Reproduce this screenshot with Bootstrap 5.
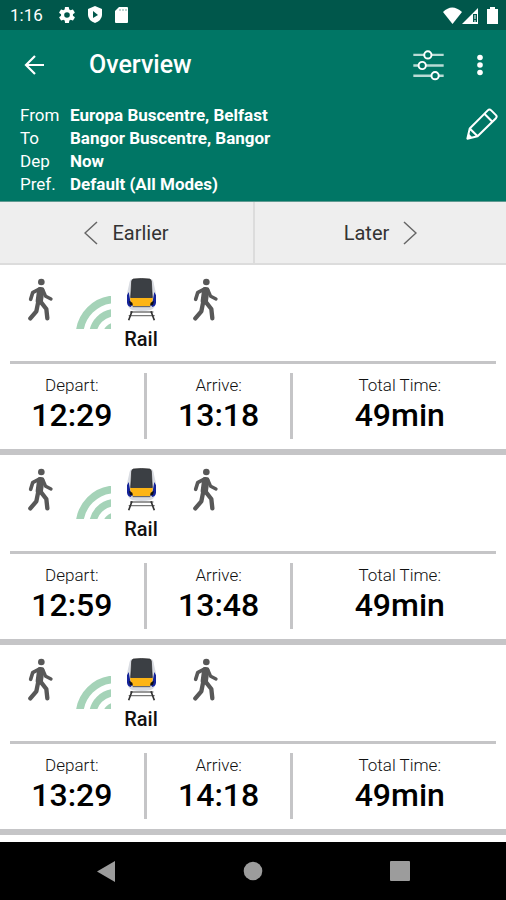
<!DOCTYPE html>
<html lang="en">
<head>
<meta charset="utf-8">
<meta name="viewport" content="width=device-width, initial-scale=1">
<title>Overview</title>
<link href="https://cdn.jsdelivr.net/npm/bootstrap@5.3.0/dist/css/bootstrap.min.css" rel="stylesheet">
<style>
  body { font-family: Roboto, "Liberation Sans", sans-serif; color: #111; background: #fff; }
  svg { display: block; flex: none; }
  .btn-plain { border: 0; padding: 0; background: none; color: inherit; }
  .status-bar { background: #00574b; height: 30px; padding: 0 8px 0 10px; font-size: 17px; line-height: 32px; }
  .app-header { background: #007665; }
  .app-bar { height: 70px; padding: 0 23px 0 24px; }
  .app-title { font-size: 25px; line-height: 32px; font-weight: 500; margin: 0 0 0 45px; }
  .menu-gap { gap: 33px; }
  .query { padding: 4px 8px 5px 20px; border-bottom: 1px solid #5f9a91; }
  .query-list { display: grid; grid-template-columns: 50px 1fr; font-size: 17px; line-height: 23px; }
  .query-list dt { font-weight: 400; }
  .query-list dd { font-weight: 700; }
  .pager { background: #eee; border-bottom: 2px solid #dcdcdc; }
  .pager-btn { height: 61px; gap: 14px; font-size: 20px; color: #333; }
  .pager-btn + .pager-btn { border-left: 2px solid #dcdcdc; }
  .trip { border-bottom: 6px solid #c5c5c7; }
  .modes { height: 96px; padding: 13px 27px 0; }
  .feed { margin: 18px 0 0 22px; }
  .rail { width: 36px; margin-left: 12px; font-size: 20px; line-height: 24px; font-weight: 500; }
  .rail svg { margin: 0 auto 6px; }
  .walk-on { margin-left: 33px; }
  .times { display: grid; grid-template-columns: 29fr 29fr 42fr; padding: 9px 0 10px; }
  .rule { height: 3px; margin: 0 10px; background: #c5c5c7; }
  .time-cell { height: 66px; }
  .time-cell:not(:last-child) { border-right: 3px solid #c5c5c7; }
  .time-cell dt { font-size: 17px; line-height: 24px; font-weight: 300; }
  .time-cell dd { font-size: 32px; line-height: 36px; font-weight: 500; color: #000; }
  .sys-nav { background: #000; height: 58px; padding: 0 33px; }
</style>
<script src="https://cdn.jsdelivr.net/npm/bootstrap@5.3.0/dist/js/bootstrap.bundle.min.js"></script>
</head>
<body>
<svg width="0" height="0" class="position-absolute" aria-hidden="true">
  <symbol id="walk" viewBox="50 38 81 129">
    <g fill="none" stroke="#585858" stroke-linecap="round" stroke-linejoin="round">
      <circle cx="93" cy="50" r="10" fill="#585858" stroke="none"/>
      <path d="M91 76L87 106" stroke-width="22"/>
      <path d="M87 71L67 82L61 102" stroke-width="11"/>
      <path d="M97 72L106 93L122 101" stroke-width="10"/>
      <path d="M84 108L78 138L60 159" stroke-width="13"/>
      <path d="M90 108L108 131L111 159" stroke-width="13"/>
    </g>
  </symbol>
  <symbol id="feed" viewBox="198 95 105 100">
    <g fill="none" stroke="#a5d3b8">
      <circle cx="318" cy="215" r="110" stroke-width="23"/>
      <circle cx="318" cy="215" r="70" stroke-width="22"/>
      <circle cx="318" cy="215" r="32" stroke-width="16"/>
    </g>
  </symbol>
  <symbol id="train" viewBox="48 38 93 129">
    <path d="M60 140H130M56 151H134" stroke="#777" stroke-width="4"/>
    <path d="M66 138L56 165M123 138L133 165" stroke="#333" stroke-width="5"/>
    <path d="M64 42Q94 37 125 42Q130 44 132 58L138 84V110Q136 130 122 134Q94 140 67 134Q53 130 51 110V84L57 58Q59 44 64 42Z" fill="#d9dce2"/>
    <path d="M56 80L51 90V112Q53 123 62 125L66 120L60 102ZM133 80L138 90V112Q136 123 127 125L123 120L129 102Z" fill="#14239a"/>
    <path d="M70 41Q94 38 119 41Q123 42 124 48L127 97H62L65 48Q66 42 70 41Z" fill="#3b3f44" stroke="#222" stroke-width="2"/>
    <path d="M60 98H129L126 113L119 122H70L63 113Z" fill="#fdb515"/>
    <path d="M57 106L67 112L69 121L60 118ZM132 106L122 112L120 121L129 118Z" fill="#111"/>
    <path d="M68 124H121" stroke="#555" stroke-width="3"/>
  </symbol>
</svg>

<div class="status-bar d-flex align-items-center text-white">
  <span>1:16</span>
  <div class="d-flex align-items-center ms-3 gap-2">
    <svg width="16" height="18" viewBox="2 1 20 22" fill="#fff" role="img" aria-label="Settings"><path d="M19.4 13a7.500 7.500 0 0 0 0-2l2.100-1.600a.5.5 0 0 0 .1-.7l-2-3.400a.5.5 0 0 0-.6-.2l-2.500 1a7.300 7.300 0 0 0-1.700-1l-.4-2.600a.5.5 0 0 0-.5-.5h-4a.5.5 0 0 0-.5.4l-.3 2.700a7.600 7.600 0 0 0-1.700 1l-2.500-1a.5.5 0 0 0-.6.200l-2 3.400c-.1.200 0 .5.100.7L4.600 11a8 8 0 0 0 0 2l-2.100 1.600a.5.5 0 0 0-.1.7l2 3.400c.1.200.4.300.6.200l2.500-1a7.300 7.300 0 0 0 1.700 1l.3 2.700c0 .2.300.4.500.4h4c.3 0 .5-.2.500-.4l.4-2.700a7.600 7.600 0 0 0 1.700-1l2.500 1c.2.100.5 0 .6-.2l2-3.400c.1-.2 0-.5-.1-.7zM12 15.500a3.500 3.500 0 1 1 0-7 3.500 3.500 0 0 1 0 7z"/></svg>
    <svg class="ms-1" width="16" height="18" viewBox="0 0 16 18" role="img" aria-label="Protected"><path d="M8 0L15 3V9Q15 14 8 17Q1 14 1 9V3Z" fill="#fff"/><path d="M6 5L11 9L6 12Z" fill="#00574b"/></svg>
    <svg class="ms-1" width="14" height="16" viewBox="0 0 14 16" role="img" aria-label="SD card"><path d="M4 0H12Q13 0 13 1V15Q13 16 12 16H1Q0 16 0 15V4Z" fill="#fff"/><path d="M5 2V4M8 2V4M11 2V4" stroke="#7fa9a3"/></svg>
  </div>
  <div class="d-flex align-items-center ms-auto">
    <svg width="19" height="17" viewBox="0 0 19 17" role="img" aria-label="Wi-Fi"><path d="M0 5Q9 -4 19 5L9.500 17Z" fill="#fff"/></svg>
    <svg width="17" height="17" viewBox="0 0 17 17" role="img" aria-label="Mobile signal"><path d="M0 17L16 1V17Z" fill="#fff"/><path d="M11 7H15V15H11Z" fill="#00574b"/><path d="M13 8V12M13 13V15" stroke="#fff"/></svg>
    <svg class="ms-2" width="11" height="17" viewBox="0 0 11 17" role="img" aria-label="Battery"><path d="M3 0H8V2H11V17H0V2H3Z" fill="#fff"/></svg>
  </div>
</div>

<header class="app-header text-white">
  <div class="app-bar d-flex align-items-center">
    <button type="button" class="btn-plain" aria-label="Back"><svg width="20" height="20" viewBox="0 0 20 20" fill="none" stroke="#fff" stroke-width="2.200"><path d="M20 10H2M11 1L2 10L11 19"/></svg></button>
    <h1 class="app-title">Overview</h1>
    <div class="menu-gap d-flex align-items-center ms-auto">
      <button type="button" class="btn-plain" aria-label="Filters"><svg width="31" height="31" viewBox="478 145 94 94" fill="none"><path d="M479 160H571M479 192H571M479 223H571" stroke="#b9dbd5" stroke-width="7"/><g fill="#007665" stroke="#fff" stroke-width="6"><circle cx="523" cy="160" r="11"/><circle cx="506" cy="192" r="11"/><circle cx="545" cy="223" r="11"/></g></svg></button>
      <button type="button" class="btn-plain" aria-label="More options"><svg width="6" height="22" viewBox="0 0 6 22" fill="#fff"><circle cx="3" cy="3.500" r="2.800"/><circle cx="3" cy="11" r="2.800"/><circle cx="3" cy="18.500" r="2.800"/></svg></button>
    </div>
  </div>
  <div class="query d-flex align-items-start">
    <dl class="query-list flex-grow-1 mb-0">
      <dt>From</dt><dd class="mb-0">Europa Buscentre, Belfast</dd>
      <dt>To</dt><dd class="mb-0">Bangor Buscentre, Bangor</dd>
      <dt>Dep</dt><dd class="mb-0">Now</dd>
      <dt>Pref.</dt><dd class="mb-0">Default (All Modes)</dd>
    </dl>
    <button type="button" class="btn-plain pt-1" aria-label="Edit journey"><svg width="32" height="32" viewBox="200 42 94 94" fill="none" stroke="#fff" stroke-width="6" stroke-linejoin="round"><path d="M204 132L211 102L264 49Q269 44 274 49L288 63Q292 67 288 72L234 125ZM254 59L278 83M211 102L234 125"/><path d="M204 132L208 117L218 128Z" fill="#fff" stroke="none"/></svg></button>
  </div>
</header>

<main>
  <nav class="pager d-flex" aria-label="Journey times">
    <button type="button" class="btn-plain pager-btn d-flex flex-fill w-50 align-items-center justify-content-center"><svg width="14" height="24" viewBox="0 0 14 24" fill="none" stroke="#666" stroke-width="1.500"><path d="M13 1L1 12L13 23"/></svg><span>Earlier</span></button>
    <button type="button" class="btn-plain pager-btn d-flex flex-fill w-50 align-items-center justify-content-center"><span>Later</span><svg width="14" height="24" viewBox="0 0 14 24" fill="none" stroke="#666" stroke-width="1.500"><path d="M1 1L13 12L1 23"/></svg></button>
  </nav>

  <ul class="list-unstyled mb-0 pb-2">
    <li class="trip">
      <div class="modes d-flex align-items-start">
        <svg width="27" height="43" role="img" aria-label="Walk"><use href="#walk"/></svg>
        <svg class="feed" width="35" height="33" role="img" aria-label="Live"><use href="#feed"/></svg>
        <div class="rail text-center"><svg width="31" height="43" aria-hidden="true"><use href="#train"/></svg>Rail</div>
        <svg class="walk-on" width="27" height="43" role="img" aria-label="Walk"><use href="#walk"/></svg>
      </div>
      <div class="rule"></div>
      <div class="times text-center">
        <dl class="time-cell mb-0"><dt>Depart:</dt><dd class="mb-0">12:29</dd></dl>
        <dl class="time-cell mb-0"><dt>Arrive:</dt><dd class="mb-0">13:18</dd></dl>
        <dl class="time-cell mb-0"><dt>Total Time:</dt><dd class="mb-0">49min</dd></dl>
      </div>
    </li>
    <li class="trip">
      <div class="modes d-flex align-items-start">
        <svg width="27" height="43" role="img" aria-label="Walk"><use href="#walk"/></svg>
        <svg class="feed" width="35" height="33" role="img" aria-label="Live"><use href="#feed"/></svg>
        <div class="rail text-center"><svg width="31" height="43" aria-hidden="true"><use href="#train"/></svg>Rail</div>
        <svg class="walk-on" width="27" height="43" role="img" aria-label="Walk"><use href="#walk"/></svg>
      </div>
      <div class="rule"></div>
      <div class="times text-center">
        <dl class="time-cell mb-0"><dt>Depart:</dt><dd class="mb-0">12:59</dd></dl>
        <dl class="time-cell mb-0"><dt>Arrive:</dt><dd class="mb-0">13:48</dd></dl>
        <dl class="time-cell mb-0"><dt>Total Time:</dt><dd class="mb-0">49min</dd></dl>
      </div>
    </li>
    <li class="trip">
      <div class="modes d-flex align-items-start">
        <svg width="27" height="43" role="img" aria-label="Walk"><use href="#walk"/></svg>
        <svg class="feed" width="35" height="33" role="img" aria-label="Live"><use href="#feed"/></svg>
        <div class="rail text-center"><svg width="31" height="43" aria-hidden="true"><use href="#train"/></svg>Rail</div>
        <svg class="walk-on" width="27" height="43" role="img" aria-label="Walk"><use href="#walk"/></svg>
      </div>
      <div class="rule"></div>
      <div class="times text-center">
        <dl class="time-cell mb-0"><dt>Depart:</dt><dd class="mb-0">13:29</dd></dl>
        <dl class="time-cell mb-0"><dt>Arrive:</dt><dd class="mb-0">14:18</dd></dl>
        <dl class="time-cell mb-0"><dt>Total Time:</dt><dd class="mb-0">49min</dd></dl>
      </div>
    </li>
  </ul>
</main>

<nav class="sys-nav fixed-bottom d-flex align-items-center" aria-label="System">
  <button type="button" class="btn-plain d-flex flex-fill justify-content-center" aria-label="Back"><svg width="20" height="21" viewBox="0 0 20 21"><path d="M1 10.500L19 0V21Z" fill="#9c9c9c"/></svg></button>
  <button type="button" class="btn-plain d-flex flex-fill justify-content-center" aria-label="Home"><svg width="20" height="20" viewBox="0 0 20 20"><circle cx="10" cy="10" r="9.300" fill="#9c9c9c"/></svg></button>
  <button type="button" class="btn-plain d-flex flex-fill justify-content-center" aria-label="Recent apps"><svg width="20" height="20" viewBox="0 0 20 20"><rect width="20" height="20" rx="1" fill="#9c9c9c"/></svg></button>
</nav>
</body>
</html>
